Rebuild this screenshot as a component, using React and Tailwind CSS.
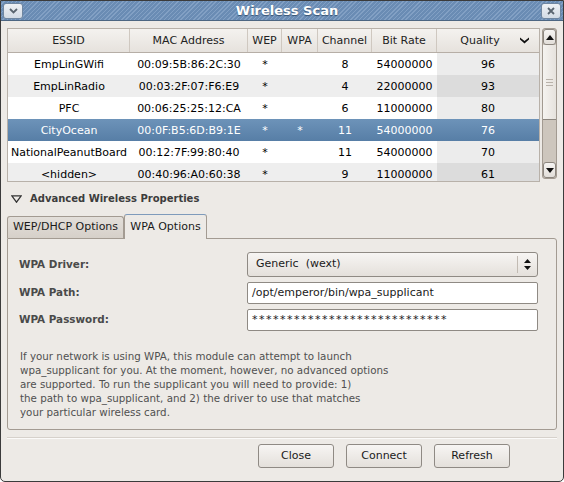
import React from 'react';

const cols = [
  { name: 'ESSID', w: 'w-[122px]' },
  { name: 'MAC Address', w: 'w-[118px]' },
  { name: 'WEP', w: 'w-[34px]' },
  { name: 'WPA', w: 'w-[36px]' },
  { name: 'Channel', w: 'w-[54px]' },
  { name: 'Bit Rate', w: 'w-[65px]' },
  { name: 'Quality', w: 'w-[102px]' },
];

const rows = [
  ['EmpLinGWifi', '00:09:5B:86:2C:30', '*', '', '8', '54000000', '96'],
  ['EmpLinRadio', '00:03:2F:07:F6:E9', '*', '', '4', '22000000', '93'],
  ['PFC', '00:06:25:25:12:CA', '*', '', '6', '11000000', '80'],
  ['CityOcean', '00:0F:B5:6D:B9:1E', '*', '*', '11', '54000000', '76'],
  ['NationalPeanutBoard', '00:12:7F:99:80:40', '*', '', '11', '54000000', '70'],
  ['<hidden>', '00:40:96:A0:60:38', '*', '', '9', '11000000', '61'],
];

const SEL = 3;

function Row({ r, i }) {
  const sel = i === SEL;
  const even = i % 2 === 1;
  return (
    <div
      className={
        'flex h-[22px] items-center shrink-0 ' +
        (sel ? 'bg-[linear-gradient(#6d93b9,#577ea6)] text-white' : even ? 'bg-[#eeeeee] text-black' : 'bg-white text-black')
      }
    >
      {r.map((v, j) => (
        <div
          key={j}
          className={
            cols[j].w +
            ' h-full flex items-center justify-center whitespace-nowrap pt-[2px] ' +
            (j === 6 && !sel ? (even ? 'bg-[#dcdcdc]' : 'bg-[#ececec]') : '')
          }
        >
          {v}
        </div>
      ))}
    </div>
  );
}

function ScrollBtn({ up }) {
  return (
    <div className="h-[16px] shrink-0 bg-[linear-gradient(#f6f4f2,#e2ded9)] border border-[#8c867f] rounded-[3px] flex items-center justify-center">
      <svg width="8" height="5" viewBox="0 0 8 5">
        {up ? <path d="M0 5 L4 0 L8 5 Z" fill="#111" /> : <path d="M0 0 L8 0 L4 5 Z" fill="#111" />}
      </svg>
    </div>
  );
}

function Button({ children }) {
  return (
    <div className="w-[76px] h-[24px] flex items-center justify-center pt-[1px] bg-[linear-gradient(#f7f5f3,#e4e0db)] border border-[#8f8a84] rounded-[3px] text-[#1a1a1a]">
      {children}
    </div>
  );
}

export default function App() {
  return (
    <div className="w-[564px] h-[482px] bg-[#edeae6] border border-[#3b3b3b] rounded-b-[5px] flex flex-col overflow-hidden font-['DejaVu_Sans',sans-serif] text-[11px] text-[#1a1a1a]">
      {/* Title bar */}
      <div className="h-[20px] shrink-0 flex items-center px-[2px] bg-[repeating-linear-gradient(135deg,#6a8cb4_0px,#6a8cb4_2px,#82a0c4_2px,#82a0c4_3px)] border-b border-[#4d6682]">
        <div className="w-[20px] h-[16px] rounded-[3px] border border-[#6f86a0] bg-[linear-gradient(#eef1f5,#d3dbe5)] flex items-center justify-center">
          <svg width="9" height="6" viewBox="0 0 9 6">
            <path d="M1 1 L4.5 4.5 L8 1" stroke="#5a6570" strokeWidth="1.8" fill="none" />
          </svg>
        </div>
        <div className="flex-1 text-center pl-[10px] text-white font-bold text-[13px] [text-shadow:0_1px_1px_#34506f]">Wireless Scan</div>
        <div className="w-[20px] h-[16px] rounded-[3px] border border-[#6f86a0] bg-[linear-gradient(#eef1f5,#d3dbe5)] flex items-center justify-center">
          <svg width="8" height="8" viewBox="0 0 8 8">
            <path d="M1 1 L7 7 M7 1 L1 7" stroke="#5a6570" strokeWidth="1.8" />
          </svg>
        </div>
      </div>

      <div className="flex-1 flex flex-col px-[6px] pt-[7px]">
        {/* Table + scrollbar */}
        <div className="flex gap-[2px] h-[154px] shrink-0">
          <div className="w-[533px] h-full border border-[#b8b1a9] bg-white overflow-hidden flex flex-col">
            <div className="flex h-[24px] shrink-0 bg-[linear-gradient(#f4f2ef,#e6e2dd)] border-b border-[#b6aea6] text-[#222]">
              {cols.map((c, j) => (
                <div
                  key={c.name}
                  className={
                    c.w +
                    ' h-full flex items-center justify-center relative pt-[1px] ' +
                    (j < 6 ? 'border-r border-[#cfc8c0]' : '')
                  }
                >
                  <span className={j === 6 ? 'mr-[16px]' : ''}>{c.name}</span>
                  {j === 6 && (
                    <svg className="absolute right-[10px] top-[8px]" width="9" height="7" viewBox="0 0 9 7">
                      <path d="M0 0.5 L4.5 4 L9 0.5 L9 2.5 L4.5 6.5 L0 2.5 Z" fill="#111" />
                    </svg>
                  )}
                </div>
              ))}
            </div>
            {rows.map((r, i) => (
              <Row key={i} r={r} i={i} />
            ))}
          </div>
          <div className="w-[15px] h-[151px] flex flex-col bg-[#cdc6bd] border border-[#a29a91] rounded-[3px] overflow-hidden">
            <ScrollBtn up />
            <div className="flex-1 flex flex-col">
              <div className="h-[75px] bg-[linear-gradient(90deg,#f5f3f0,#e6e2dd)] border-b border-[#8c867f] flex flex-col items-center justify-center gap-[2px]">
                <div className="w-[7px] h-px bg-[#b9b2aa]" />
                <div className="w-[7px] h-px bg-[#b9b2aa]" />
                <div className="w-[7px] h-px bg-[#b9b2aa]" />
              </div>
            </div>
            <ScrollBtn />
          </div>
        </div>

        {/* Expander */}
        <div className="h-[31px] shrink-0 flex items-center pt-[2px] pl-[4px] gap-[8px] font-bold text-[10px] text-[#3c3c3c]">
          <svg width="11" height="8" viewBox="0 0 11 8">
            <path d="M0.8 0.8 L10.2 0.8 L5.5 7.2 Z" stroke="#333" strokeWidth="1.3" fill="none" />
          </svg>
          <span>Advanced Wireless Properties</span>
        </div>

        {/* Tabs */}
        <div className="flex items-end h-[25px] shrink-0">
          <div className="w-[117px] h-[22px] flex items-center justify-center bg-[linear-gradient(#e3dfda,#d6d0c9)] border border-b-0 border-[#a39b92] rounded-t-[3px]">
            WEP/DHCP Options
          </div>
          <div className="w-[83px] h-[25px] flex items-center justify-center bg-[#edeae6] border border-b-0 border-[#a39b92] border-t-[#7f9bbb] rounded-t-[3px] -mb-px relative z-10">
            WPA Options
          </div>
        </div>
        <div className="h-[192px] shrink-0 border border-[#a39b92] rounded-b-[3px] rounded-tr-[3px] pl-[11px] pr-[18px] pt-[13px]">
          <div className="grid grid-cols-[228px_1fr] gap-y-[5px] items-center">
            <div className="font-bold text-[10.4px] text-[#4a4a4a]">WPA Driver:</div>
            <div className="h-[25px] flex items-center bg-[linear-gradient(#f7f5f3,#e4e0db)] border border-[#8f8a84] rounded-[3px] text-[#1a1a1a]">
              <span className="flex-1 pl-[8px] whitespace-pre">Generic  (wext)</span>
              <div className="w-px h-[17px] bg-[#c2bbb3]" />
              <svg className="mx-[6px]" width="7" height="11" viewBox="0 0 7 11">
                <path d="M0 4 L3.5 0 L7 4 Z M0 7 L7 7 L3.5 11 Z" fill="#111" />
              </svg>
            </div>
            <div className="font-bold text-[10.4px] text-[#4a4a4a]">WPA Path:</div>
            <div className="h-[22px] flex items-center bg-white border border-[#8f8a84] rounded-[2px] pl-[4px] text-[#1a1a1a]">
              /opt/emperor/bin/wpa_supplicant
            </div>
            <div className="font-bold text-[10.4px] text-[#4a4a4a]">WPA Password:</div>
            <div className="h-[22px] flex items-center bg-white border border-[#8f8a84] rounded-[2px] pl-[4px] text-[#1a1a1a] tracking-[1.5px]">
              ****************************
            </div>
          </div>
          <p className="mt-[18px] pl-[1px] leading-[14px] text-[10.3px] text-[#505050]">
            If your network is using WPA, this module can attempt to launch
            <br />
            wpa_supplicant for you. At the moment, however, no advanced options
            <br />
            are supported. To run the supplicant you will need to provide: 1)
            <br />
            the path to wpa_supplicant, and 2) the driver to use that matches
            <br />
            your particular wireless card.
          </p>
        </div>

        {/* Separator */}
        <div className="mt-[7px] h-[2px] shrink-0 border-t border-[#d6d1cb] bg-[#fbfaf9]" />

        {/* Buttons */}
        <div className="mt-[5px] flex justify-end gap-[12px] mr-[47px]">
          <Button>Close</Button>
          <Button>Connect</Button>
          <Button>Refresh</Button>
        </div>
      </div>
    </div>
  );
}
